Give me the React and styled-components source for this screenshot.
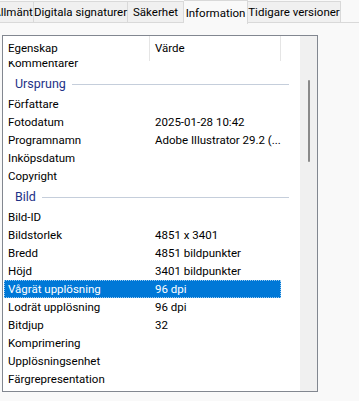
import styled, { createGlobalStyle } from "styled-components";

const GlobalStyle = createGlobalStyle`
  html, body {
    margin: 0;
    padding: 0;
    background: #f9f9f9;
    font-family: "Segoe UI", Roboto, "Noto Sans", sans-serif;
    font-size: 11.5px;
    color: #000;
    overflow: hidden;
  }
`;

const Page = styled.div`
  width: 359px;
  height: 401px;
  overflow: hidden;
  position: relative;
`;

const TabBar = styled.div`
  display: flex;
  height: 23px;
  margin-left: -8px;
  border-bottom: 1px solid #d9d9d9;
  box-sizing: border-box;
`;

const Tab = styled.div`
  display: flex;
  align-items: center;
  justify-content: center;
  flex-shrink: 0;
  width: ${(p) => p.$w}px;
  height: ${(p) => (p.$active ? "24px" : "22px")};
  margin-top: ${(p) => (p.$active ? "0" : "1px")};
  background: ${(p) => (p.$active ? "#f9f9f9" : "#f0f0f0")};
  border: 1px solid #d9d9d9;
  border-bottom: ${(p) => (p.$active ? "none" : "1px solid #d9d9d9")};
  border-left: ${(p) => (p.$first ? "1px solid #d9d9d9" : "none")};
  box-sizing: border-box;
  white-space: nowrap;
  position: relative;
  z-index: ${(p) => (p.$active ? 1 : 0)};
`;

const ListBox = styled.div`
  margin: 12px 0 0 2px;
  width: 316px;
  height: 357px;
  border: 1px solid #828790;
  box-sizing: border-box;
  background: #fff;
  display: flex;
`;

const Content = styled.div`
  flex: 1;
  display: flex;
  flex-direction: column;
  overflow: hidden;
`;

const Header = styled.div`
  display: flex;
  height: 25px;
  flex-shrink: 0;
  background: #fff;
  position: relative;
  z-index: 1;
`;

const HeaderCell = styled.div`
  width: ${(p) => p.$w}px;
  display: flex;
  align-items: center;
  padding-left: 5px;
  padding-bottom: 2px;
  box-sizing: border-box;
  border-right: 1px solid #e5e5e5;
`;

const Body = styled.div`
  flex: 1;
  overflow: hidden;
`;

const Scroller = styled.div`
  margin-top: -7px;
`;

const Row = styled.div`
  display: flex;
  height: 18px;
  align-items: center;
  margin-left: 1px;
  width: 277px;
  box-sizing: border-box;
  background: ${(p) => (p.$selected ? "#0078d7" : "transparent")};
  color: ${(p) => (p.$selected ? "#fff" : "#000")};
  outline: ${(p) => (p.$selected ? "1px dotted #99c9ef" : "none")};
  outline-offset: -1px;
`;

const Cell = styled.div`
  width: ${(p) => p.$w}px;
  padding-left: 4px;
  box-sizing: border-box;
  white-space: nowrap;
  overflow: hidden;
`;

const Group = styled.div`
  display: flex;
  align-items: center;
  height: 23px;
  padding-left: 12px;
  padding-right: 11px;
  gap: 6px;
  color: #1e3287;
  font-size: 12.5px;
`;

const GroupLine = styled.div`
  flex: 1;
  height: 1px;
  background: #c5cedb;
  margin-top: 1px;
`;

const ScrollBar = styled.div`
  width: 17px;
  background: #f0f0f0;
  display: flex;
  justify-content: center;
  padding-top: 44px;
  box-sizing: border-box;
`;

const Thumb = styled.div`
  width: 2px;
  height: 82px;
  border-radius: 1px;
  background: #8a8a8a;
  margin-left: 1px;
`;

const tabs = [
  ["Allmänt", 42],
  ["Digitala signaturer", 94],
  ["Säkerhet", 56],
  ["Information", 64],
  ["Tidigare versioner", 93],
];

const origin = [
  ["Författare", ""],
  ["Fotodatum", "2025-01-28 10:42"],
  ["Programnamn", "Adobe Illustrator 29.2 (..."],
  ["Inköpsdatum", ""],
  ["Copyright", ""],
];

const image = [
  ["Bild-ID", ""],
  ["Bildstorlek", "4851 x 3401"],
  ["Bredd", "4851 bildpunkter"],
  ["Höjd", "3401 bildpunkter"],
  ["Vågrät upplösning", "96 dpi", true],
  ["Lodrät upplösning", "96 dpi"],
  ["Bitdjup", "32"],
  ["Komprimering", ""],
  ["Upplösningsenhet", ""],
  ["Färgrepresentation", ""],
];

function PropRow({ name, value, selected }) {
  return (
    <Row $selected={selected}>
      <Cell $w={147}>{name}</Cell>
      <Cell $w={130}>{value}</Cell>
    </Row>
  );
}

export default function App() {
  return (
    <Page>
      <GlobalStyle />
      <TabBar>
        {tabs.map(([t, w], i) => (
          <Tab key={t} $w={w} $first={i === 0} $active={t === "Information"}>
            {t}
          </Tab>
        ))}
      </TabBar>
      <ListBox>
        <Content>
          <Header>
            <HeaderCell $w={147}>Egenskap</HeaderCell>
            <HeaderCell $w={131}>Värde</HeaderCell>
          </Header>
          <Body>
            <Scroller>
              <PropRow name="Kommentarer" value="" />
              <Group>
                Ursprung
                <GroupLine />
              </Group>
              {origin.map(([n, v]) => (
                <PropRow key={n} name={n} value={v} />
              ))}
              <Group>
                Bild
                <GroupLine />
              </Group>
              {image.map(([n, v, s]) => (
                <PropRow key={n} name={n} value={v} selected={s} />
              ))}
            </Scroller>
          </Body>
        </Content>
        <ScrollBar>
          <Thumb />
        </ScrollBar>
      </ListBox>
    </Page>
  );
}
